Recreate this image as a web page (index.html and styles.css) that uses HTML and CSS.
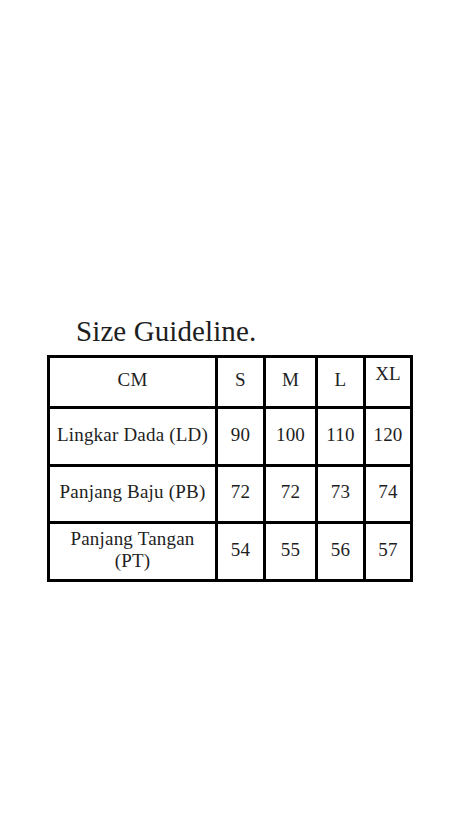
FILE: index.html
```html
<!DOCTYPE html>
<html>
<head>
<meta charset="utf-8">
<link rel="stylesheet" href="styles.css">
</head>
<body>
<div class="page">
  <h1 class="title">Size Guideline.</h1>
  <div class="grid">
    <div class="cell">CM</div>
    <div class="cell">S</div>
    <div class="cell">M</div>
    <div class="cell">L</div>
    <div class="cell raised">XL</div>

    <div class="cell">Lingkar Dada (LD)</div>
    <div class="cell">90</div>
    <div class="cell">100</div>
    <div class="cell">110</div>
    <div class="cell">120</div>

    <div class="cell">Panjang Baju (PB)</div>
    <div class="cell">72</div>
    <div class="cell">72</div>
    <div class="cell">73</div>
    <div class="cell">74</div>

    <div class="cell">Panjang Tangan<br>(PT)</div>
    <div class="cell">54</div>
    <div class="cell">55</div>
    <div class="cell">56</div>
    <div class="cell">57</div>
  </div>
</div>
</body>
</html>
```
FILE: styles.css
```css
html, body {
  margin: 0;
  padding: 0;
  background: #ffffff;
}
body {
  width: 472px;
  height: 825px;
  font-family: "Liberation Serif", "DejaVu Serif", serif;
  color: #1e1e1e;
}
.page {
  padding-top: 314px;
  padding-left: 47px;
}
.title {
  margin: 0 0 7px 29px;
  font-weight: normal;
  font-size: 29px;
  line-height: 34px;
  letter-spacing: 0.1px;
}
.grid {
  display: grid;
  width: 366px;
  grid-template-columns: 165px 45px 49px 45px 44px;
  grid-template-rows: 48px 55px 54px 55px;
  gap: 3px;
  padding: 3px;
  box-sizing: border-box;
  background: #000;
}
.cell {
  background: #fff;
  display: flex;
  align-items: center;
  justify-content: center;
  text-align: center;
  font-size: 19px;
  line-height: 22px;
  letter-spacing: 0.2px;
  padding-bottom: 4px;
}
.raised {
  padding-bottom: 16px;
}
```
